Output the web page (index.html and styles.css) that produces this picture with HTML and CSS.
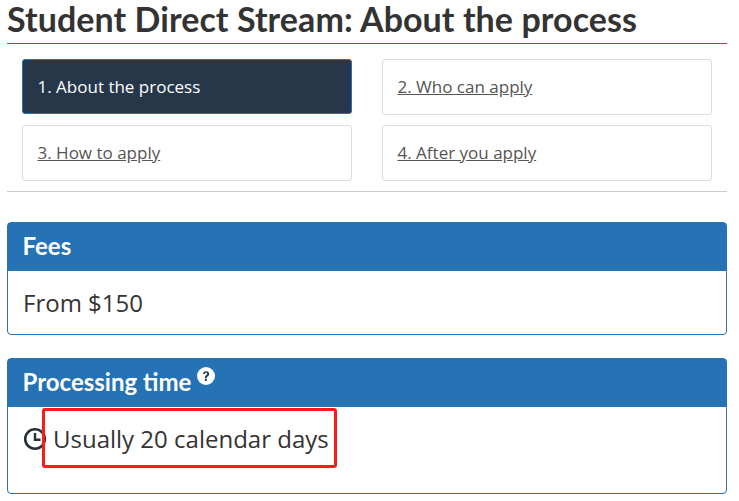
FILE: index.html
```html
<!DOCTYPE html>
<html lang="en">
<head>
<meta charset="utf-8">
<title>Student Direct Stream: About the process</title>
<link rel="stylesheet" href="styles.css">
</head>
<body>
<main class="page">
  <h1 class="title">Student Direct Stream: About the process</h1>
  <nav class="steps">
    <a class="step step-active">1. About the process</a>
    <a class="step" href="#">2. Who can apply</a>
    <a class="step" href="#">3. How to apply</a>
    <a class="step" href="#">4. After you apply</a>
  </nav>
  <section class="panel panel-fees">
    <h2 class="panel-head">Fees</h2>
    <div class="panel-body"><p class="panel-text">From $150</p></div>
  </section>
  <section class="panel panel-time">
    <h2 class="panel-head">Processing time<svg class="help" viewBox="0 0 18 18" aria-hidden="true"><circle cx="9" cy="9" r="9" fill="#fff"/><path d="M5.9 7.1C6 5.3 7.3 4.2 9.1 4.2c1.800 0 3.100 1.100 3.100 2.700 0 1.200-.6 1.900-1.600 2.500-.7.4-.9.700-.9 1.300v.3H7.900v-.5c0-1.100.4-1.700 1.300-2.300.7-.4 1-.8 1-1.400 0-.7-.5-1.100-1.200-1.100-.7 0-1.200.5-1.300 1.400z" fill="#26374a"/><rect x="7.800" y="11.700" width="2.100" height="2.100" fill="#26374a"/></svg></h2>
    <div class="panel-body">
      <p class="panel-text time-line"><svg class="clock" viewBox="0 0 24 24" aria-hidden="true"><circle cx="12" cy="12" r="9.800" fill="none" stroke="#26303a" stroke-width="2.600"/><path d="M12 6v6.800h5.500" fill="none" stroke="#26303a" stroke-width="2.400"/></svg><span>Usually 20 calendar days</span></p>
    </div>
    <div class="annotation"></div>
  </section>
</main>
</body>
</html>
```

FILE: styles.css
```css
* { box-sizing: border-box; }
html, body { margin: 0; padding: 0; background: #fff; overflow: hidden; }
body { color: #333; font-family: "Open Sans", "Noto Sans", sans-serif; }
.page { width: 720px; margin-left: 7px; }
.title {
  margin: 0;
  height: 44px;
  font-family: Lato, sans-serif;
  font-size: 34px;
  font-weight: 700;
  line-height: 38px;
  letter-spacing: 0.07px;
  color: #333;
  border-bottom: 1px solid #af3c43;
}
.steps {
  display: grid;
  grid-template-columns: 330px 330px;
  grid-auto-rows: 56px;
  column-gap: 30px;
  row-gap: 10px;
  padding: 15px 15px 10px;
  height: 148px;
  border-bottom: 1px solid #ccc;
}
.step {
  display: flex;
  align-items: center;
  padding: 0 0 1px 14.5px;
  font-size: 17px;
  color: #555;
  background: #fff;
  border: 1px solid #ddd;
  border-radius: 3px;
}
.step-active {
  color: #fff;
  background: #26374a;
  border-color: #2572b4;
  height: 55px;
  padding-bottom: 0;
}
.panel {
  position: relative;
  border: 1px solid #2572b4;
  border-radius: 4px;
}
.panel-fees { margin-top: 30px; height: 113px; }
.panel-time { margin-top: 23px; height: 136px; }
.panel-head {
  display: flex;
  margin: 0;
  height: 48px;
  padding: 8px 15px 0 14.5px;
  font-family: Lato, sans-serif;
  font-size: 24px;
  font-weight: 700;
  line-height: 30px;
  color: #fff;
  background: #2572b4;
}
.help { width: 18px; height: 18px; margin: 0 0 0 5.5px; }
.panel-body { padding: 15px; }
.panel-text { margin: 0; font-size: 24px; line-height: 34px; color: #333; }
.time-line { display: flex; align-items: center; }
.clock { width: 24px; height: 24px; margin-right: 6px; flex: none; }
.annotation {
  position: absolute;
  left: 34px;
  top: 49px;
  width: 295px;
  height: 60px;
  border: 3px solid #ff1a1a;
  border-radius: 3px;
}
```
